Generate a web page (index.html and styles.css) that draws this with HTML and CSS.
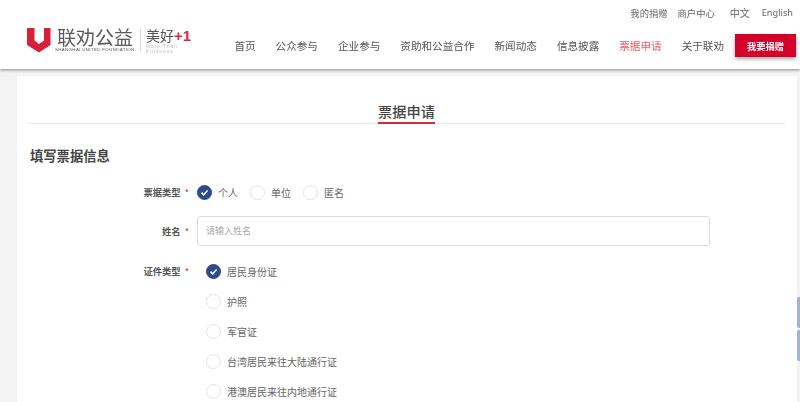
FILE: index.html
```html
<!DOCTYPE html>
<html lang="zh-CN">
<head>
<meta charset="utf-8">
<title>票据申请</title>
<link rel="stylesheet" href="styles.css">
</head>
<body>
<header class="site-header">
  <div class="brand">
    <svg class="brand-mark" width="24" height="25" viewBox="0 0 24 25"><path d="M0 0H7.5V12.5L12 16L17 12.5V0H23.5V17L12 24.5L0 17Z" fill="#d9203a"/></svg>
    <div class="brand-name">
      <div class="brand-cn">联劝公益</div>
      <div class="brand-en">SHANGHAI UNITED FOUNDATION</div>
    </div>
    <div class="brand-divider"></div>
    <div class="brand-slogan">
      <div class="slogan-cn">美好<b>+1</b></div>
      <div class="slogan-en">More Than<br>Kindness</div>
    </div>
  </div>
  <div class="header-right">
    <div class="top-links">
      <a>我的捐赠</a><a>商户中心</a><a class="lang">中文</a><a class="lang">English</a>
    </div>
    <nav class="main-nav">
      <a>首页</a><a>公众参与</a><a>企业参与</a><a>资助和公益合作</a><a>新闻动态</a><a>信息披露</a><a class="active">票据申请</a><a>关于联劝</a>
      <button class="donate">我要捐赠</button>
    </nav>
  </div>
</header>
<main class="card">
  <div class="tab-bar"><h1 class="tab-title">票据申请</h1></div>
  <h2 class="section-title">填写票据信息</h2>
  <div class="form-row inline">
    <label class="form-label">票据类型<i>*</i></label>
    <div class="radio-inline">
      <span class="radio checked"><svg width="9" height="9" viewBox="0 0 9 9"><path d="M1.5 4.6L3.7 6.8L7.6 2.4" fill="none" stroke="#fff" stroke-width="1.5"/></svg></span><span class="radio-text">个人</span>
      <span class="radio"></span><span class="radio-text">单位</span>
      <span class="radio"></span><span class="radio-text">匿名</span>
    </div>
  </div>
  <div class="form-row name-row">
    <label class="form-label">姓名<i>*</i></label>
    <div class="input-box">请输入姓名</div>
  </div>
  <div class="form-row id-row">
    <label class="form-label">证件类型<i>*</i></label>
    <div class="radio-list">
      <div class="radio-item"><span class="radio checked"><svg width="9" height="9" viewBox="0 0 9 9"><path d="M1.5 4.6L3.7 6.8L7.6 2.4" fill="none" stroke="#fff" stroke-width="1.5"/></svg></span><span class="radio-text">居民身份证</span></div>
      <div class="radio-item"><span class="radio"></span><span class="radio-text">护照</span></div>
      <div class="radio-item"><span class="radio"></span><span class="radio-text">军官证</span></div>
      <div class="radio-item"><span class="radio"></span><span class="radio-text">台湾居民来往大陆通行证</span></div>
      <div class="radio-item"><span class="radio"></span><span class="radio-text">港澳居民来往内地通行证</span></div>
    </div>
  </div>
</main>
<div class="side-tabs"><span></span><span></span></div>
</body>
</html>
```
FILE: styles.css
```css
* { box-sizing: border-box; }
html, body { height: 402px; overflow: hidden; }
body {
  margin: 0;
  background: #f3f3f3;
  color: #555;
  font-family: "Noto Sans CJK SC", "Noto Sans", sans-serif;
  filter: blur(0.45px);
}
.site-header {
  height: 69px;
  background: #fff;
  box-shadow: 0 1px 3px rgba(0,0,0,.45);
  display: flex;
  justify-content: space-between;
  padding: 0 4px 0 27px;
  position: relative;
}
.brand { display: flex; align-items: flex-start; padding-top: 28px; }
.brand-mark { display: block; }
.brand-name { margin-left: 6px; width: 77px; }
.brand-cn { font-size: 19px; line-height: 17px; color: #5a5a5a; white-space: nowrap; }
.brand-en { font-family: "Liberation Sans", sans-serif; font-size: 4.4px; line-height: 6px; margin: 2px 0 0 -2px; color: #555; letter-spacing: .35px; white-space: nowrap; }
.brand-divider { width: 1px; height: 24px; background: #ddd; margin-left: 6px; }
.brand-slogan { margin-left: 5px; }
.slogan-cn { font-size: 14px; line-height: 14px; color: #555; white-space: nowrap; }
.slogan-cn b { color: #e0223f; font-family: "Liberation Sans", sans-serif; font-size: 15px; }
.slogan-en { font-family: "Liberation Sans", sans-serif; font-size: 4.6px; line-height: 5.3px; margin-top: 1px; color: #bbb; letter-spacing: 1.1px; white-space: nowrap; }
.header-right { display: flex; flex-direction: column; align-items: flex-end; }
.top-links { display: flex; height: 34px; padding: 6px 3px 0 0; font-size: 9.3px; line-height: 14px; color: #666; }
.top-links a { margin-left: 10px; }
.top-links .lang { font-size: 10px; margin-left: 15px; }
.top-links .lang:last-child { margin-left: 12px; font-size: 9.2px; font-family: "Noto Sans", sans-serif; }
.main-nav { display: flex; align-items: center; height: 23px; font-size: 10.6px; color: #555; }
.main-nav a { margin-right: 20px; white-space: nowrap; }
.main-nav a.active { color: #ee5a66; }
.main-nav a:nth-last-of-type(1) { margin-right: 11px; }
.donate {
  width: 61px;
  height: 23px;
  border: 0;
  padding: 0;
  background: #d7002a;
  color: #fff;
  font: 700 9.3px "Noto Sans CJK SC", sans-serif;
  box-shadow: 0 2px 4px rgba(0,0,0,.35);
}
.card {
  margin: 7px 3px 0 17px;
  background: #fff;
  padding: 0 12px 0 11px;
  height: 340px;
}
.tab-bar {
  display: flex;
  justify-content: center;
  border-bottom: 1px solid #e8e8e8;
  height: 48px;
  padding-top: 25px;
}
.tab-title {
  margin: 0;
  height: 23px;
  border-bottom: 2px solid #d8283c;
  font-size: 14.2px;
  line-height: 21px;
  font-weight: 500;
  color: #444;
}
.section-title { margin: 22px 0 0 2px; font-size: 13.3px; line-height: 19px; font-weight: 700; color: #444; }
.form-row { display: flex; }
.form-label {
  width: 169px;
  flex: none;
  padding-right: 8px;
  text-align: right;
  font-size: 9.3px;
  font-weight: 700;
  color: #555;
  line-height: 15px;
}
.form-label i { font-style: normal; color: #e33; margin-left: 4px; font-weight: 400; }
.inline { margin-top: 20px; height: 17px; }
.radio-inline, .radio-item { display: flex; align-items: center; height: 15px; }
.radio {
  width: 15px;
  height: 15px;
  flex: none;
  border-radius: 50%;
  border: 1px solid #e2e2e2;
  background: #fff;
  display: flex;
  align-items: center;
  justify-content: center;
}
.radio.checked { background: #2c4a8c; border-color: #2c4a8c; }
.radio-text { font-size: 10px; margin: 0 12px 1px 6px; color: #666; white-space: nowrap; }
.name-row { margin-top: 14px; align-items: center; }
.input-box {
  width: 513px;
  height: 30px;
  border: 1px solid #ddd;
  border-radius: 3px;
  padding-left: 8px;
  font-size: 9px;
  line-height: 28px;
  color: #aaa;
}
.id-row { margin-top: 18px; }
.radio-list { margin-left: 9px; display: flex; flex-direction: column; gap: 15px; }
.side-tabs { position: absolute; right: 0; top: 297px; display: flex; flex-direction: column; gap: 2px; }
.side-tabs span { display: block; width: 3px; height: 31px; background: #9db3dc; border-radius: 2px 0 0 2px; }
```
